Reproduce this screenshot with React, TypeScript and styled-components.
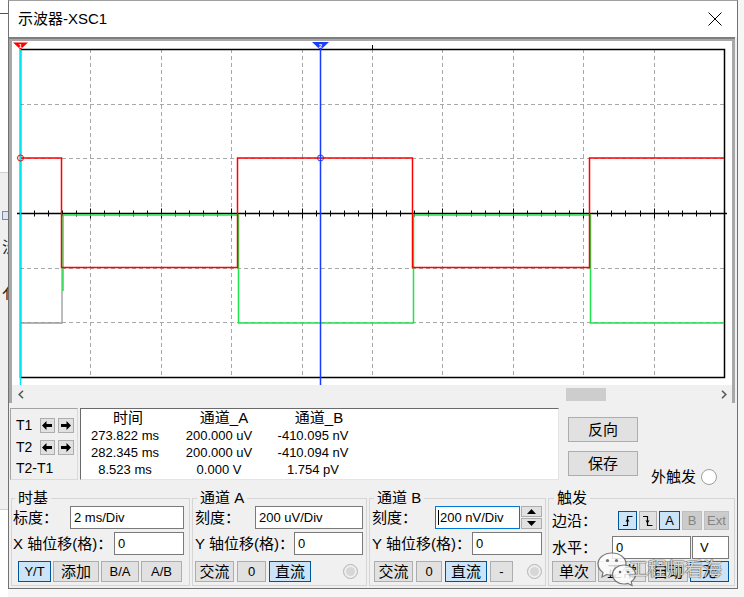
import React from "react";
import styled, { createGlobalStyle, css } from "styled-components";

const SANS = `"Liberation Sans", "Noto Sans CJK SC", sans-serif`;
const CJK = `"Noto Sans CJK SC", "Liberation Sans", sans-serif`;

const GlobalStyle = createGlobalStyle`
  * { box-sizing: border-box; }
  html, body { margin: 0; padding: 0; }
  body { background: #f6f6f6; font-family: ${SANS}; color: #000; }
`;

const Page = styled.div`
  display: flex;
  align-items: flex-start;
  width: 744px;
  height: 597px;
  overflow: hidden;
  background: #f6f6f6;
`;

const Backdrop = styled.div`
  width: 8px;
  height: 597px;
  flex: none;
  background: #fff;
  display: flex;
  flex-direction: column;
  overflow: hidden;
`;

const BackLine = styled.div`
  height: 1px;
  margin-top: 13px;
  background: #e81123;
`;

const BackPanel = styled.div`
  margin-top: 158px;
  height: 338px;
  background: #efefef;
  border-top: 1px solid #cfcfcf;
  border-bottom: 1px solid #cfcfcf;
  display: flex;
  flex-direction: column;
  padding-left: 2px;
  font: 16px/16px ${CJK};
  color: #222;
  white-space: nowrap;
`;

const BackIcon = styled.div`
  width: 7px;
  height: 9px;
  margin-top: 38px;
  border: 1px solid #7a8aa0;
  background: #dde5ef;
`;

const BackGlyph = styled.div<{ $mt: number }>`
  margin-top: ${(p) => p.$mt}px;
`;

const Window = styled.div`
  position: relative;
  width: 730px;
  height: 589px;
  flex: none;
  border: 1px solid #727272;
  border-top-color: #a0a0a0;
  background: #f0f0f0;
  display: flex;
  flex-direction: column;
`;

const TitleBar = styled.div`
  height: 36px;
  flex: none;
  background: #fff;
  display: flex;
  align-items: center;
  justify-content: space-between;
  padding: 0 15px 0 9px;
`;

const Title = styled.span`
  font: 15px/20px ${SANS};
  color: #000;
`;

const ScopeFrame = styled.div`
  margin-right: 2px;
  background: #a8a8a8;
  border-top: 2px solid #7e7e7e;
  padding: 2px 3px 0 3px;
  display: flex;
  flex-direction: column;
`;

const Display = styled.div`
  height: 344px;
  background: #fff;
`;

const ScreenSvg = styled.svg`
  display: block;
`;

const ScrollBar = styled.div`
  height: 18px;
  background: #f0f0f0;
  display: flex;
  align-items: center;
`;

const ScrollArrow = styled.div`
  width: 17px;
  height: 18px;
  display: flex;
  align-items: center;
  justify-content: center;
`;

const ScrollTrack = styled.div`
  flex: 1;
  height: 18px;
  display: flex;
  align-items: center;
`;

const ScrollThumb = styled.div<{ $offset: number }>`
  margin-left: ${(p) => p.$offset}px;
  width: 40px;
  height: 13px;
  background: #cdcdcd;
`;

const InfoRow = styled.div`
  display: flex;
  height: 72px;
  margin-top: 5px;
  padding-left: 1px;
`;

const TBox = styled.div`
  width: 68px;
  height: 72px;
  border: 1px solid #a3a3a3;
  border-right-color: #dadada;
  border-bottom-color: #dadada;
  padding: 8px 0 0 5px;
  display: flex;
  flex-direction: column;
`;

const TRow = styled.div<{ $mt?: number }>`
  display: flex;
  align-items: center;
  height: 16px;
  margin-top: ${(p) => p.$mt ?? 0}px;
`;

const TLabel = styled.span`
  width: 24px;
  font: 14px/16px ${SANS};
  white-space: nowrap;
`;

const ArrowButton = styled.button`
  width: 16px;
  height: 15px;
  margin: 0 3px 0 0;
  padding: 0;
  background: #e1e1e1;
  border: 1px solid #adadad;
  display: flex;
  align-items: center;
  justify-content: center;
`;

const DataBox = styled.div`
  width: 479px;
  height: 72px;
  margin-left: 2px;
  background: #fff;
  border-top: 1px solid #6a6a6a;
  border-left: 1px solid #6a6a6a;
  border-right: 1px solid #e4e4e4;
  border-bottom: 1px solid #e4e4e4;
  padding-left: 4px;
  display: grid;
  grid-template-columns: repeat(3, 80px);
  grid-template-rows: 18px 17px 17px 16px;
  column-gap: 14px;
  align-content: start;
`;

const HeadCell = styled.div<{ $shift: number }>`
  font: 15px/18px ${SANS};
  text-align: center;
  white-space: nowrap;
  transform: translateX(${(p) => p.$shift}px);
`;

const ValueCell = styled.div`
  font: 13px/17px ${SANS};
  text-align: center;
  white-space: nowrap;
`;

const SideCol = styled.div`
  margin-left: 9px;
  padding-top: 9px;
  display: flex;
  flex-direction: column;
`;

const BigButton = styled.button`
  width: 70px;
  height: 25px;
  margin: 0;
  padding: 0;
  background: #e1e1e1;
  border: 1px solid #adadad;
  font: 15px/23px ${SANS};
  color: #000;
`;

const SaveRow = styled.div`
  display: flex;
  align-items: flex-start;
  margin-top: 9px;
`;

const ExtLabel = styled.span`
  margin: 17px 0 0 13px;
  font: 15px/18px ${SANS};
  white-space: nowrap;
`;

const ExtRadio = styled.span`
  width: 16px;
  height: 16px;
  margin: 18px 0 0 5px;
  border-radius: 50%;
  border: 1px solid #9d9d9d;
  background: #fff;
`;

const Groups = styled.div`
  display: flex;
  gap: 2px;
  margin-top: 10px;
  padding-left: 2px;
`;

const Group = styled.fieldset<{ $w: number; $pl: number; $pr: number }>`
  width: ${(p) => p.$w}px;
  min-width: 0;
  margin: 0;
  padding: 0 ${(p) => p.$pr}px 3px ${(p) => p.$pl}px;
  border: 1px solid #d5d5d5;
  display: flex;
  flex-direction: column;
`;

const Legend = styled.legend`
  margin-left: 2px;
  padding: 0 3px;
  font: 15px/16px ${SANS};
  color: #000;
`;

const Row = styled.div<{ $mt?: number }>`
  display: flex;
  align-items: center;
  justify-content: space-between;
  height: 23px;
  margin-top: ${(p) => p.$mt ?? 0}px;
`;

const Label = styled.span`
  font: 15px/18px ${SANS};
  white-space: nowrap;
`;

const Field = styled.div<{ $w: number; $focus?: boolean; $pl?: number }>`
  width: ${(p) => p.$w}px;
  height: 23px;
  background: #fff;
  border: 1px solid ${(p) => (p.$focus ? "#0078d7" : "#7a7a7a")};
  padding-left: ${(p) => p.$pl ?? 3}px;
  font: 13px/21px ${SANS};
  color: #000;
  display: flex;
  align-items: center;
  white-space: nowrap;
`;

const Caret = styled.span`
  width: 1px;
  height: 15px;
  background: #000;
  margin-right: 1px;
`;

const Cluster = styled.div<{ $gap: number }>`
  display: flex;
  align-items: center;
  gap: ${(p) => p.$gap}px;
`;

const Spin = styled.div`
  width: 21px;
  height: 23px;
  display: flex;
  flex-direction: column;
  gap: 1px;
`;

const SpinHalf = styled.button`
  flex: 1;
  margin: 0;
  padding: 0;
  background: #e1e1e1;
  border: 1px solid #adadad;
  display: flex;
  align-items: center;
  justify-content: center;
`;

const BtnRow = styled.div<{ $ml?: number; $gap: number; $mt?: number }>`
  display: flex;
  align-items: center;
  gap: ${(p) => p.$gap}px;
  height: 21px;
  margin-left: ${(p) => p.$ml ?? 0}px;
  margin-top: ${(p) => p.$mt ?? 6}px;
`;

const Btn = styled.button<{ $w: number; $h?: number; $active?: boolean; $off?: boolean; $latin?: boolean }>`
  width: ${(p) => p.$w}px;
  height: ${(p) => p.$h ?? 21}px;
  flex: none;
  margin: 0;
  padding: 0;
  background: #e1e1e1;
  border: 1px solid #adadad;
  color: #000;
  font: ${(p) => (p.$latin ? `13px/17px ${SANS}` : `15px/17px ${SANS}`)};
  display: flex;
  align-items: center;
  justify-content: center;
  ${(p) =>
    p.$active &&
    css`
      background: #cce4f7;
      border-color: #005499;
    `}
  ${(p) =>
    p.$off &&
    css`
      background: #cccccc;
      border-color: #bfbfbf;
      color: #848484;
    `}
`;

const DimRadio = styled.span<{ $ml: number }>`
  width: 15px;
  height: 15px;
  margin-left: ${(p) => p.$ml}px;
  border-radius: 50%;
  border: 1px solid #b8b8b8;
  background: #d6d6d6;
  box-shadow: inset 0 0 0 2px #efefef;
`;

const Watermark = styled.div`
  position: absolute;
  left: 587px;
  top: 549px;
  display: flex;
  align-items: flex-start;
  pointer-events: none;
`;

const WatermarkText = styled.span`
  margin: 7px 0 0 -11px;
  font: 19px/22px ${CJK};
  color: rgba(255, 255, 255, 0.82);
  text-shadow: 0 0 1px rgba(50, 50, 50, 0.95), 0 0 1px rgba(50, 50, 50, 0.95);
  letter-spacing: -0.5px;
  white-space: nowrap;
`;

/* ---------- icons / drawings ---------- */

const CloseIcon = () => (
  <svg width="14" height="14" viewBox="0 0 14 14">
    <path d="M0.5 0.5 L13.5 13.5 M13.5 0.5 L0.5 13.5" stroke="#000" strokeWidth="1" fill="none" />
  </svg>
);

const Chevron = ({ dir }: { dir: "left" | "right" }) => (
  <svg width="6" height="9" viewBox="0 0 6 9">
    <path
      d={dir === "left" ? "M5 0.8 L1.2 4.5 L5 8.2" : "M1 0.8 L4.8 4.5 L1 8.2"}
      stroke="#5a5a5a"
      strokeWidth="1.6"
      fill="none"
    />
  </svg>
);

const BoldArrow = ({ dir }: { dir: "left" | "right" }) => (
  <svg width="10" height="9" viewBox="0 0 10 9">
    <path
      d={dir === "left" ? "M0 4.5 L4.5 0 V3 H10 V6 H4.5 V9 Z" : "M10 4.5 L5.5 0 V3 H0 V6 H5.5 V9 Z"}
      fill="#000"
    />
  </svg>
);

const SpinTri = ({ up }: { up: boolean }) => (
  <svg width="9" height="5" viewBox="0 0 9 5">
    <path d={up ? "M0 5 L4.5 0 L9 5 Z" : "M0 0 L4.5 5 L9 0 Z"} fill="#000" />
  </svg>
);

const EdgeIcon = ({ rising }: { rising: boolean }) => (
  <svg width="12" height="12" viewBox="0 0 12 12">
    <path
      d={rising ? "M1 10.5 H5.5 V1.5 H10.5" : "M1 1.5 H5.5 V10.5 H10.5"}
      stroke="#000"
      strokeWidth="1.2"
      fill="none"
    />
    <path d={rising ? "M3.5 6.5 L5.5 3.5 L7.5 6.5 Z" : "M3.5 5.5 L5.5 8.5 L7.5 5.5 Z"} fill="#000" />
  </svg>
);

const WeChatLogo = () => (
  <svg width="44" height="38" viewBox="0 0 44 38">
    <path
      d="M16 3 C8 3 2 8 2 14 C2 17.5 4 20.5 7 22.5 L6 27 L11 24.5 C12.6 25 14.3 25.2 16 25.2 C24 25.2 30 20 30 14 C30 8 24 3 16 3 Z"
      fill="rgba(255,255,255,0.8)"
      stroke="rgba(90,90,90,0.8)"
      strokeWidth="1.2"
    />
    <path
      d="M28 15 C21.5 15 16.5 19.3 16.5 24.5 C16.5 29.7 21.5 34 28 34 C29.4 34 30.7 33.8 31.9 33.4 L36 35.5 L35.2 31.6 C37.8 29.9 39.5 27.4 39.5 24.5 C39.5 19.3 34.5 15 28 15 Z"
      fill="rgba(255,255,255,0.85)"
      stroke="rgba(90,90,90,0.8)"
      strokeWidth="1.2"
    />
    <circle cx="11.5" cy="10.5" r="1.6" fill="rgba(90,90,90,0.85)" />
    <circle cx="20.5" cy="10.5" r="1.6" fill="rgba(90,90,90,0.85)" />
    <circle cx="24" cy="22" r="1.3" fill="rgba(90,90,90,0.85)" />
    <circle cx="32" cy="22" r="1.3" fill="rgba(90,90,90,0.85)" />
  </svg>
);

const SW = 720;
const SH = 344;
const GL = 8;
const GR = 712;
const GT = 8;
const GB = 336;
const DX = (GR - GL) / 10;
const DY = (GB - GT) / 6;
const AXIS = GT + 3 * DY;

const ScopeScreen = () => {
  const vlines = Array.from({ length: 9 }, (_, i) => Math.round(GL + (i + 1) * DX) + 0.5);
  const hlines = [1, 2, 4, 5].map((j) => Math.round(GT + j * DY) + 0.5);
  const ticks = Array.from({ length: 51 }, (_, i) => ({ x: Math.round(GL + (i * DX) / 5) + 0.5, major: i % 5 === 0 }));
  const ax = Math.round(AXIS) + 0.5;
  return (
    <ScreenSvg width={SW} height={SH} viewBox={`0 0 ${SW} ${SH}`}>
      <g stroke="#a8a8a8" strokeWidth="1" strokeDasharray="4 3" fill="none">
        {vlines.map((x) => (
          <line key={`v${x}`} x1={x} y1={GT} x2={x} y2={GB} />
        ))}
        {hlines.map((y) => (
          <line key={`h${y}`} x1={GL} y1={y} x2={GR} y2={y} />
        ))}
      </g>
      <rect x={GL + 0.5} y={GT + 0.5} width={GR - GL} height={GB - GT} fill="none" stroke="#000" strokeWidth="1.5" />
      <line x1={360.5} y1={4} x2={360.5} y2={GT} stroke="#000" strokeWidth="1" />
      <line x1={5} y1={ax} x2={715} y2={ax} stroke="#000" strokeWidth="1.5" />
      <g stroke="#000" strokeWidth="1">
        {ticks.map((t) => (
          <line key={`t${t.x}`} x1={t.x} y1={ax - (t.major ? 5 : 3)} x2={t.x} y2={ax + (t.major ? 5 : 3)} />
        ))}
      </g>
      <path d={`M${GL + 1} 282 H50 V227`} stroke="#9a9a9a" strokeWidth="1.3" fill="none" />
      <path
        d={`M51 250 V174 H226.5 V282 H401.5 V174 H578.5 V282 H${GR}`}
        stroke="#1fe34b"
        strokeWidth="1.5"
        fill="none"
      />
      <path
        d={`M${GL} 117 H49.5 V226.5 H225.5 V117 H400.5 V226.5 H577.5 V117 H${GR}`}
        stroke="#ff0000"
        strokeWidth="1.5"
        fill="none"
      />
      <line x1={8.5} y1={8} x2={8.5} y2={SH} stroke="#00e5ef" strokeWidth="1.5" />
      <line x1={308.5} y1={8} x2={308.5} y2={SH} stroke="#1a3cff" strokeWidth="1.5" />
      <circle cx={8.5} cy={117} r={3} fill="none" stroke="#ff0000" strokeWidth="1" />
      <circle cx={308.5} cy={117} r={3} fill="none" stroke="#1a3cff" strokeWidth="1" />
      <polygon points="1,1.5 16,1.5 8.5,8.5" fill="#ff0000" />
      <text x={8.5} y={7} fontSize="6" fontWeight="bold" fill="#fff" textAnchor="middle" fontFamily="Liberation Sans, sans-serif">
        1
      </text>
      <polygon points="300,1 317,1 308.5,9" fill="#1a3cff" />
      <text x={308.5} y={6.5} fontSize="6" fontWeight="bold" fill="#fff" textAnchor="middle" fontFamily="Liberation Sans, sans-serif">
        2
      </text>
    </ScreenSvg>
  );
};

const readings = [
  ["273.822 ms", "200.000 uV", "-410.095 nV"],
  ["282.345 ms", "200.000 uV", "-410.094 nV"],
  ["8.523 ms", "0.000 V", "1.754 pV"],
];

export default function App() {
  return (
    <>
      <GlobalStyle />
      <Page>
        <Backdrop>
          <BackLine />
          <BackPanel>
            <BackIcon />
            <BackGlyph $mt={18}>泛</BackGlyph>
            <BackGlyph $mt={30}>亻</BackGlyph>
          </BackPanel>
        </Backdrop>
        <Window>
          <TitleBar>
            <Title>示波器-XSC1</Title>
            <CloseIcon />
          </TitleBar>

          <ScopeFrame>
            <Display>
              <ScopeScreen />
            </Display>
            <ScrollBar>
              <ScrollArrow>
                <Chevron dir="left" />
              </ScrollArrow>
              <ScrollTrack>
                <ScrollThumb $offset={537} />
              </ScrollTrack>
              <ScrollArrow>
                <Chevron dir="right" />
              </ScrollArrow>
            </ScrollBar>
          </ScopeFrame>

          <InfoRow>
            <TBox>
              <TRow>
                <TLabel>T1</TLabel>
                <ArrowButton>
                  <BoldArrow dir="left" />
                </ArrowButton>
                <ArrowButton>
                  <BoldArrow dir="right" />
                </ArrowButton>
              </TRow>
              <TRow $mt={6}>
                <TLabel>T2</TLabel>
                <ArrowButton>
                  <BoldArrow dir="left" />
                </ArrowButton>
                <ArrowButton>
                  <BoldArrow dir="right" />
                </ArrowButton>
              </TRow>
              <TRow $mt={5}>
                <TLabel>T2-T1</TLabel>
              </TRow>
            </TBox>
            <DataBox>
              <HeadCell $shift={3}>时间</HeadCell>
              <HeadCell $shift={5}>通道_A</HeadCell>
              <HeadCell $shift={6}>通道_B</HeadCell>
              {readings.map((r, i) =>
                r.map((v, j) => <ValueCell key={`${i}-${j}`}>{v}</ValueCell>)
              )}
            </DataBox>
            <SideCol>
              <BigButton>反向</BigButton>
              <SaveRow>
                <BigButton>保存</BigButton>
                <ExtLabel>外触发</ExtLabel>
                <ExtRadio />
              </SaveRow>
            </SideCol>
          </InfoRow>

          <Groups>
            <Group $w={179} $pl={1} $pr={5}>
              <Legend>时基</Legend>
              <Row>
                <Label>标度：</Label>
                <Field $w={114}>2 ms/Div</Field>
              </Row>
              <Row $mt={3}>
                <Label>X 轴位移(格)：</Label>
                <Field $w={70}>0</Field>
              </Row>
              <BtnRow $ml={5} $gap={2}>
                <Btn $w={33} $latin $active>
                  Y/T
                </Btn>
                <Btn $w={46}>添加</Btn>
                <Btn $w={38} $latin>
                  B/A
                </Btn>
                <Btn $w={41} $latin>
                  A/B
                </Btn>
              </BtnRow>
            </Group>

            <Group $w={175} $pl={2} $pr={3}>
              <Legend>通道 A</Legend>
              <Row>
                <Label>刻度：</Label>
                <Field $w={108}>200 uV/Div</Field>
              </Row>
              <Row $mt={3}>
                <Label>Y 轴位移(格)：</Label>
                <Field $w={69}>0</Field>
              </Row>
              <BtnRow $gap={3}>
                <Btn $w={39}>交流</Btn>
                <Btn $w={29} $latin>
                  0
                </Btn>
                <Btn $w={42} $active>
                  直流
                </Btn>
                <DimRadio $ml={29} />
              </BtnRow>
            </Group>

            <Group $w={177} $pl={2} $pr={3}>
              <Legend>通道 B</Legend>
              <Row>
                <Label>刻度：</Label>
                <Cluster $gap={1}>
                  <Field $w={85} $focus $pl={2}>
                    <Caret />
                    200 nV/Div
                  </Field>
                  <Spin>
                    <SpinHalf>
                      <SpinTri up />
                    </SpinHalf>
                    <SpinHalf>
                      <SpinTri up={false} />
                    </SpinHalf>
                  </Spin>
                </Cluster>
              </Row>
              <Row $mt={3}>
                <Label>Y 轴位移(格)：</Label>
                <Field $w={70}>0</Field>
              </Row>
              <BtnRow $ml={2} $gap={3}>
                <Btn $w={39}>交流</Btn>
                <Btn $w={26} $latin>
                  0
                </Btn>
                <Btn $w={42} $active>
                  直流
                </Btn>
                <Btn $w={23} $latin>
                  -
                </Btn>
                <DimRadio $ml={11} />
              </BtnRow>
            </Group>

            <Group $w={187} $pl={3} $pr={5}>
              <Legend>触发</Legend>
              <Row $mt={3}>
                <Label>边沿：</Label>
                <Cluster $gap={2}>
                  <Btn $w={19} $h={19} $active>
                    <EdgeIcon rising />
                  </Btn>
                  <Btn $w={18} $h={19}>
                    <EdgeIcon rising={false} />
                  </Btn>
                  <Cluster $gap={2}>
                    <Btn $w={21} $h={19} $latin $active>
                      A
                    </Btn>
                    <Btn $w={20} $h={19} $latin $off>
                      B
                    </Btn>
                    <Btn $w={25} $h={19} $latin $off>
                      Ext
                    </Btn>
                  </Cluster>
                </Cluster>
              </Row>
              <Row $mt={4}>
                <Label>水平：</Label>
                <Cluster $gap={1}>
                  <Field $w={79}>0</Field>
                  <Field $w={37} $pl={7}>
                    V
                  </Field>
                </Cluster>
              </Row>
              <BtnRow $gap={2} $mt={2}>
                <Btn $w={44}>单次</Btn>
                <Btn $w={48}>正常</Btn>
                <Btn $w={40}>自动</Btn>
                <Btn $w={39} $active>
                  无
                </Btn>
              </BtnRow>
            </Group>
          </Groups>

          <Watermark>
            <WeChatLogo />
            <WatermarkText>工程师看海</WatermarkText>
          </Watermark>
        </Window>
      </Page>
    </>
  );
}
